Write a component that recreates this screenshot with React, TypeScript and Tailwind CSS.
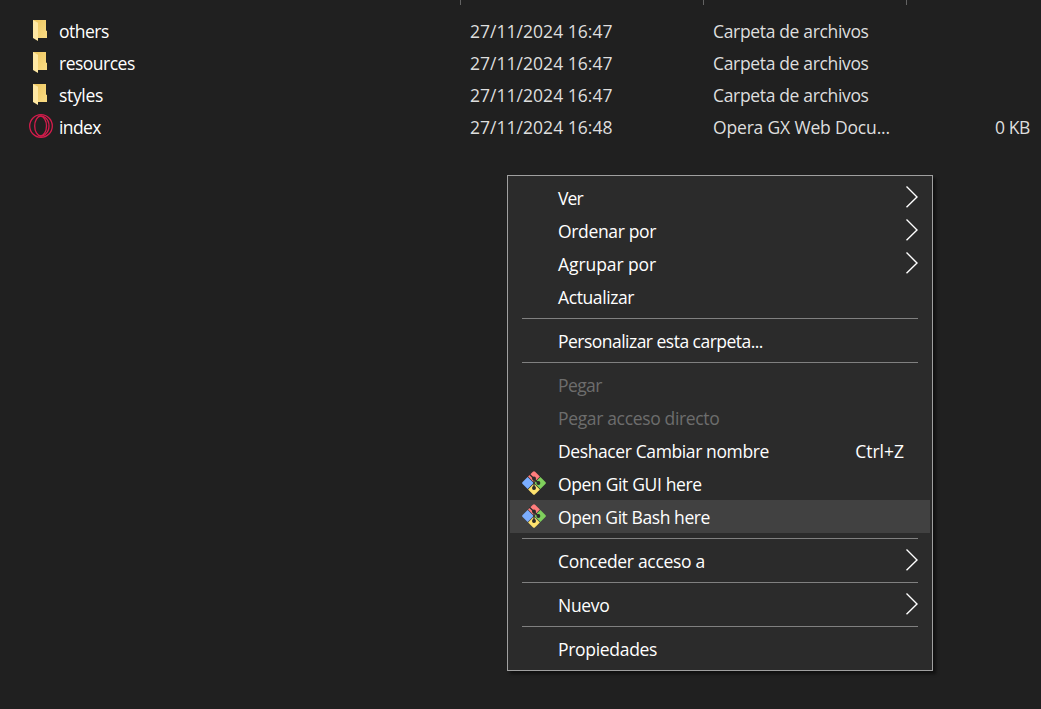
import { Fragment } from "react";

type FileRow = {
  name: string;
  date: string;
  type: string;
  size?: string;
  icon: "folder" | "opera";
  nameTracking: string;
  typeTracking: string;
};

const files: FileRow[] = [
  { name: "others", date: "27/11/2024 16:47", type: "Carpeta de archivos", icon: "folder", nameTracking: "tracking-[-0.5px]", typeTracking: "tracking-[-0.34px]" },
  { name: "resources", date: "27/11/2024 16:47", type: "Carpeta de archivos", icon: "folder", nameTracking: "tracking-[-0.5px]", typeTracking: "tracking-[-0.34px]" },
  { name: "styles", date: "27/11/2024 16:47", type: "Carpeta de archivos", icon: "folder", nameTracking: "tracking-[-0.33px]", typeTracking: "tracking-[-0.34px]" },
  { name: "index", date: "27/11/2024 16:48", type: "Opera GX Web Docu...", size: "0 KB", icon: "opera", nameTracking: "tracking-[-0.6px]", typeTracking: "tracking-[-0.17px]" },
];

type MenuItem = {
  label: string;
  tracking: string;
  submenu?: boolean;
  disabled?: boolean;
  shortcut?: string;
  git?: boolean;
  active?: boolean;
};

const groups: MenuItem[][] = [
  [
    { label: "Ver", tracking: "tracking-[-0.9px]", submenu: true },
    { label: "Ordenar por", tracking: "tracking-[-0.35px]", submenu: true },
    { label: "Agrupar por", tracking: "tracking-[-0.08px]", submenu: true },
    { label: "Actualizar", tracking: "tracking-[-0.4px]" },
  ],
  [{ label: "Personalizar esta carpeta...", tracking: "tracking-[-0.52px]" }],
  [
    { label: "Pegar", tracking: "tracking-[-0.6px]", disabled: true },
    { label: "Pegar acceso directo", tracking: "tracking-[-0.34px]", disabled: true },
    { label: "Deshacer Cambiar nombre", tracking: "tracking-[-0.39px]", shortcut: "Ctrl+Z" },
    { label: "Open Git GUI here", tracking: "tracking-[-0.35px]", git: true },
    { label: "Open Git Bash here", tracking: "tracking-[-0.42px]", git: true, active: true },
  ],
  [{ label: "Conceder acceso a", tracking: "tracking-[-0.31px]", submenu: true }],
  [{ label: "Nuevo", tracking: "tracking-[-0.3px]", submenu: true }],
  [{ label: "Propiedades", tracking: "tracking-[-0.3px]" }],
];

function FolderIcon() {
  return (
    <svg width="24" height="24" viewBox="0 0 24 24">
      <defs>
        <linearGradient id="folder-back" x1="0" y1="0" x2="1" y2="1">
          <stop offset="0" stopColor="#edc65f" />
          <stop offset="1" stopColor="#fadc85" />
        </linearGradient>
      </defs>
      <path d="M4 2H17V12.5L18 13V20H8L4 18Z" fill="url(#folder-back)" />
      <path d="M4 2L9 4.8V23L4 20Z" fill="#ffe8a3" />
    </svg>
  );
}

function OperaIcon() {
  return (
    <svg width="24" height="24" viewBox="0 0 24 24" fill="none" stroke="#d41c4c" strokeWidth="1.3">
      <circle cx="12" cy="12" r="11.3" />
      <ellipse cx="11.6" cy="12" rx="5.9" ry="9.8" />
      <path d="M9 2.8C13.5 -.2 20 4.8 20 12S13.5 24.2 9 21.2" />
    </svg>
  );
}

function GitIcon() {
  return (
    <svg width="24" height="24" viewBox="0 0 24 24">
      <path d="M10.9 .7Q12 -.3 13.1 .7L17.9 5.5L12 11.4L6.1 5.5Z" fill="#ff7d7d" />
      <path d="M5.6 6L11.4 11.8V12.2L5.6 18L.6 13Q-.3 12 .6 11Z" fill="#7baeff" />
      <path d="M18.4 6L23.4 11Q24.3 12 23.4 13L18.4 18L12.6 12.2V11.8Z" fill="#7fd05c" />
      <path d="M12 12.6L17.9 18.5L13.1 23.3Q12 24.3 10.9 23.3L6.1 18.5Z" fill="#ffe26e" />
      <g stroke="#2b2b2b" strokeWidth="1.3" fill="#2b2b2b">
        <path d="M7.5 3.2L16.3 12M12 7.2V17" fill="none" />
        <circle cx="12" cy="7.4" r="1.3" />
        <circle cx="16.4" cy="12" r="1.3" />
        <circle cx="12" cy="17" r="1.3" />
      </g>
    </svg>
  );
}

function Chevron() {
  return (
    <svg width="13" height="22" viewBox="0 0 13 22" fill="none" className="-mt-0.5">
      <path d="M1.5 .5L12 11L1.5 21.2" stroke="#fff" strokeWidth="1.4" />
    </svg>
  );
}

function MenuRow({ item }: { item: MenuItem }) {
  return (
    <div
      className={`mx-0.5 flex h-[33px] items-center pr-3 pl-3 ${item.active ? "bg-[#414141]" : ""} ${
        item.disabled ? "text-[#6d6d6d]" : "text-white"
      }`}
    >
      <span className="-mt-px flex w-9 shrink-0">{item.git && <GitIcon />}</span>
      <span className={`grow whitespace-nowrap ${item.tracking}`}>{item.label}</span>
      {item.shortcut && <span className="mr-3.5 whitespace-nowrap">{item.shortcut}</span>}
      {item.submenu && <Chevron />}
    </div>
  );
}

export default function App() {
  return (
    <main className="relative h-[709px] w-[1041px] overflow-hidden bg-[#202020] font-['Open_Sans','Noto_Sans',sans-serif] text-[17.5px] leading-6 text-[#dedede]">
      <div className="flex h-[14px]">
        <div className="h-[5px] w-[461px] border-r border-[#636363]" />
        <div className="h-[5px] w-[243px] border-r border-[#636363]" />
        <div className="h-[5px] w-[203px] border-r border-[#636363]" />
      </div>
      <div>
        {files.map((f) => (
          <div key={f.name} className="flex h-8 items-center pr-[11px] pl-[29px] whitespace-nowrap">
            <span className="flex w-[30px] shrink-0">{f.icon === "folder" ? <FolderIcon /> : <OperaIcon />}</span>
            <span className={`mt-0.5 w-[411px] shrink-0 text-white ${f.nameTracking}`}>{f.name}</span>
            <span className="mt-0.5 w-[243px] shrink-0 tracking-[0.03px]">{f.date}</span>
            <span className={`mt-0.5 grow ${f.typeTracking}`}>{f.type}</span>
            <span className="mt-0.5 tracking-[-0.4px]">{f.size}</span>
          </div>
        ))}
      </div>

      <div className="absolute top-[175px] left-[507px] w-[426px] border border-[#a0a0a0] bg-[#2b2b2b] py-[5px] shadow-[3px_3px_3px_rgba(0,0,0,0.5)]">
        {groups.map((group, i) => (
          <Fragment key={group[0].label}>
            {i > 0 && <div className="mx-3.5 my-[5px] h-px bg-[#808080]" />}
            {group.map((item) => (
              <MenuRow key={item.label} item={item} />
            ))}
          </Fragment>
        ))}
      </div>
    </main>
  );
}
